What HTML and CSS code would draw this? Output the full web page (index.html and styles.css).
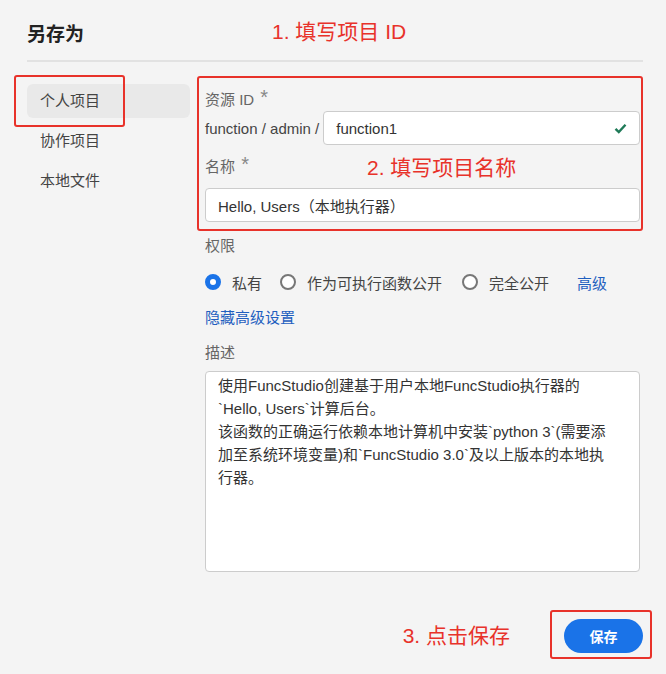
FILE: index.html
```html
<!DOCTYPE html>
<html>
	<head>
		<meta charset="utf-8">
		<title>另存为</title>
		<link rel="stylesheet" href="styles.css">
	</head>
	<body>
		<div class="page">
			<div class="header">
				<h1 class="title">另存为</h1>
				<span class="note">1. 填写项目 ID</span>
			</div>
			<div class="content">
				<ul class="aside">
					<li class="current">
						<a href="javascript:void(0)">个人项目</a>
						<span class="mark mark-aside"></span>
					</li>
					<li><a href="javascript:void(0)">协作项目</a></li>
					<li><a href="javascript:void(0)">本地文件</a></li>
				</ul>
				<div class="main">
					<div class="marked">
						<div class="label">资源 ID <span class="req">*</span></div>
						<div class="id-row">
							<span class="prefix">function / admin /</span>
							<div class="input">
								<span>function1</span>
								<svg class="ok" width="13" height="11" viewBox="0 0 13 11">
									<path d="M1.5 5.8 L4.8 9 L11.5 1.8" fill="none" stroke="#1f7a58" stroke-width="2.4"/>
								</svg>
							</div>
						</div>
						<div class="label label-name">
							名称 <span class="req">*</span>
							<span class="note note-name">2. 填写项目名称</span>
						</div>
						<div class="input input-name"><span>Hello, Users（本地执行器）</span></div>
					</div>
					<div class="label label-perm">权限</div>
					<div class="radios">
						<label class="radio"><i class="dot checked"></i>私有</label>
						<label class="radio"><i class="dot"></i>作为可执行函数公开</label>
						<label class="radio"><i class="dot"></i>完全公开</label>
						<a class="link more" href="javascript:void(0)">高级</a>
					</div>
					<a class="link hide" href="javascript:void(0)">隐藏高级设置</a>
					<div class="label label-desc">描述</div>
					<textarea class="desc">使用FuncStudio创建基于用户本地FuncStudio执行器的`Hello, Users`计算后台。
该函数的正确运行依赖本地计算机中安装`python 3`(需要添加至系统环境变量)和`FuncStudio 3.0`及以上版本的本地执行器。</textarea>
					<div class="footer">
						<span class="note note-save">3. 点击保存</span>
						<div class="save-box">
							<button class="save">保存</button>
						</div>
					</div>
				</div>
			</div>
		</div>
	</body>
</html>
```

FILE: styles.css
```css
*{
	padding: 0;
	margin: 0;
	box-sizing: border-box;
}
ul{
	list-style: none;
}
a{
	text-decoration: none;
}
html,body{
	width: 100%;
	height: 100%;
}
body{
	background-color: #f4f4f4;
	font-family: "Liberation Sans", "Noto Sans CJK SC", sans-serif;
	font-size: 15px;
	color: #333;
}
.page{
	width: 643px;
	padding-left: 27px;
}
.header{
	display: flex;
	align-items: center;
	height: 62px;
	padding-top: 4px;
	border-bottom: 2px solid #e2e2e2;
}
.title{
	font-size: 19px;
	font-weight: 700;
	color: #222;
	width: 245px;
}
.note{
	color: #e8322a;
	font-size: 21px;
	line-height: 24px;
	white-space: nowrap;
}
.content{
	display: flex;
	margin-top: 14px;
}
/* 左侧菜单 */
.aside{
	width: 163px;
	padding-top: 8px;
}
.aside li{
	position: relative;
	height: 34px;
	margin-bottom: 6px;
	border-radius: 6px;
	line-height: 34px;
	padding-left: 13px;
}
.aside li a{
	color: #444;
}
.aside li.current{
	background-color: #e9e9e9;
}
.mark{
	position: absolute;
	border: 2px solid #e8322a;
	border-radius: 3px;
}
.mark-aside{
	left: -13px;
	top: -9px;
	width: 111px;
	height: 52px;
}
/* 表单 */
.main{
	width: 435px;
	margin-left: 15px;
}
.marked{
	margin: 0 -3px 0 -8px;
	padding: 12px 1px 7px 6px;
	border: 2px solid #e8322a;
	border-radius: 3px;
}
.label{
	position: relative;
	line-height: 20px;
	color: #666;
}
.req{
	display: inline-block;
	font-size: 20px;
	line-height: 14px;
	vertical-align: top;
	margin-left: 2px;
	color: #888;
}
.id-row{
	display: flex;
	align-items: center;
	margin-top: 1px;
}
.prefix{
	color: #444;
	margin-right: 4px;
	white-space: nowrap;
}
.input{
	display: flex;
	align-items: center;
	justify-content: space-between;
	flex: 1;
	height: 34px;
	padding: 0 12px;
	background-color: #fff;
	border: 1px solid #ccc;
	border-radius: 4px;
	color: #333;
}
.label-name{
	margin-top: 12px;
}
.note-name{
	position: absolute;
	left: 162px;
	top: -1px;
}
.input-name{
	margin-top: 11px;
}
.label-perm{
	margin-top: 5px;
}
.radios{
	display: flex;
	align-items: center;
	height: 20px;
	margin-top: 16px;
	color: #444;
}
.radio{
	display: flex;
	align-items: center;
	margin-right: 18px;
}
.radio:nth-child(2){
	margin-right: 20px;
}
.dot{
	display: inline-block;
	width: 16px;
	height: 16px;
	border: 2px solid #777;
	border-radius: 50%;
	margin-right: 11px;
	background-color: #fff;
}
.dot.checked{
	border: 5px solid #1a73e8;
}
.link{
	color: #1f5fbf;
}
.more{
	margin-left: 10px;
}
.hide{
	display: block;
	line-height: 20px;
	margin-top: 16px;
}
.label-desc{
	margin-top: 15px;
}
.desc{
	display: block;
	width: 100%;
	height: 201px;
	margin-top: 8px;
	padding: 2px 21px 2px 12px;
	border: 1px solid #ccc;
	border-radius: 4px;
	background-color: #fff;
	font-family: "Liberation Sans", "Noto Sans CJK SC", sans-serif;
	font-size: 15px;
	line-height: 23px;
	color: #333;
	resize: none;
}
.footer{
	display: flex;
	align-items: center;
	justify-content: flex-end;
	margin: 38px -12px 0 0;
}
.note-save{
	margin-right: 40px;
	margin-top: 3px;
}
.save-box{
	padding: 7px 7px 4px 12px;
	border: 2px solid #e8322a;
	border-radius: 3px;
}
.save{
	display: block;
	width: 79px;
	height: 34px;
	border: none;
	border-radius: 17px;
	background-color: #1a73e8;
	color: #fff;
	font-family: "Liberation Sans", "Noto Sans CJK SC", sans-serif;
	font-size: 14px;
	font-weight: 700;
}
```
